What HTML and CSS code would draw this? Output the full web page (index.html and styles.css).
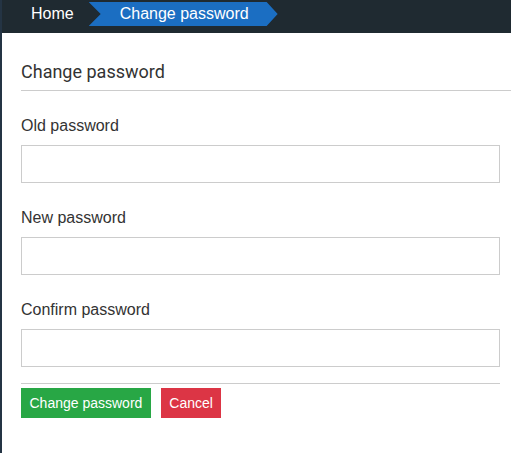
FILE: index.html
```html
<!DOCTYPE html>
<html>
<head>
    <title>Change password</title>
    <link rel="stylesheet" href="styles.css">
</head>
<body>
    <div class="top-bar">
        <span class="crumb">Home</span>
        <span class="crumb crumb-active">Change password</span>
    </div>

    <div class="page">
        <h2 class="page-title">Change password</h2>

        <form class="password-form" action="/password" method="post">
            <div class="field">
                <label for="oldPassword">Old password</label>
                <input type="password" id="oldPassword" name="oldPassword">
            </div>
            <div class="field">
                <label for="newPassword">New password</label>
                <input type="password" id="newPassword" name="newPassword">
            </div>
            <div class="field">
                <label for="confirmPassword">Confirm password</label>
                <input type="password" id="confirmPassword" name="confirmPassword">
            </div>
            <div class="actions">
                <button type="submit" class="btn btn-save">Change password</button>
                <button type="button" class="btn btn-cancel">Cancel</button>
            </div>
        </form>
    </div>
</body>
</html>
```

FILE: styles.css
```css
body {
    margin: 0;
    height: 453px;
    box-sizing: border-box;
    border-left: 2px solid #243444;
    font-family: "Liberation Sans", Arial, sans-serif;
    color: #333;
    background-color: #fff;
    overflow: hidden;
}

/* Breadcrumb bar along the top */
.top-bar {
    display: flex;
    align-items: flex-start;
    height: 33px;
    padding-top: 2px;
    box-sizing: border-box;
    margin-left: -2px;
    background-color: #1f2a31;
}

.crumb {
    height: 24px;
    line-height: 24px;
    font-size: 16px;
    color: #fff;
    margin-left: 31px;
}

.crumb-active {
    margin-left: 15px;
    padding: 0 29px 0 31px;
    background-color: #1b6ec2;
    clip-path: polygon(0 0, calc(100% - 11px) 0, 100% 50%, calc(100% - 11px) 100%, 0 100%, 12px 50%);
}

.page {
    padding-left: 19px;
}

.page-title {
    margin: 27px 0 0 0;
    padding-bottom: 6px;
    border-bottom: 1px solid #ccc;
    font-family: Roboto, sans-serif;
    font-weight: normal;
    font-size: 18px;
    line-height: 24px;
    color: #333;
}

.password-form {
    width: 479px;
    padding-top: 25px;
}

.field {
    margin-bottom: 25px;
}

.field label {
    display: block;
    font-size: 16px;
    line-height: 20px;
    margin-bottom: 9px;
}

.field input {
    display: block;
    width: 100%;
    height: 38px;
    box-sizing: border-box;
    border: 1px solid #ccc;
    padding: 6px 10px;
    font-size: 16px;
}

.actions {
    display: flex;
    gap: 10px;
    margin-top: -9px;
    padding-top: 4px;
    border-top: 1px solid #ccc;
}

.btn {
    height: 30px;
    padding: 0 8.5px;
    border: none;
    font-family: "Liberation Sans", Arial, sans-serif;
    font-size: 14px;
    color: #fff;
}

.btn-save {
    background-color: #28a745;
}

.btn-cancel {
    background-color: #dc3545;
}
```
